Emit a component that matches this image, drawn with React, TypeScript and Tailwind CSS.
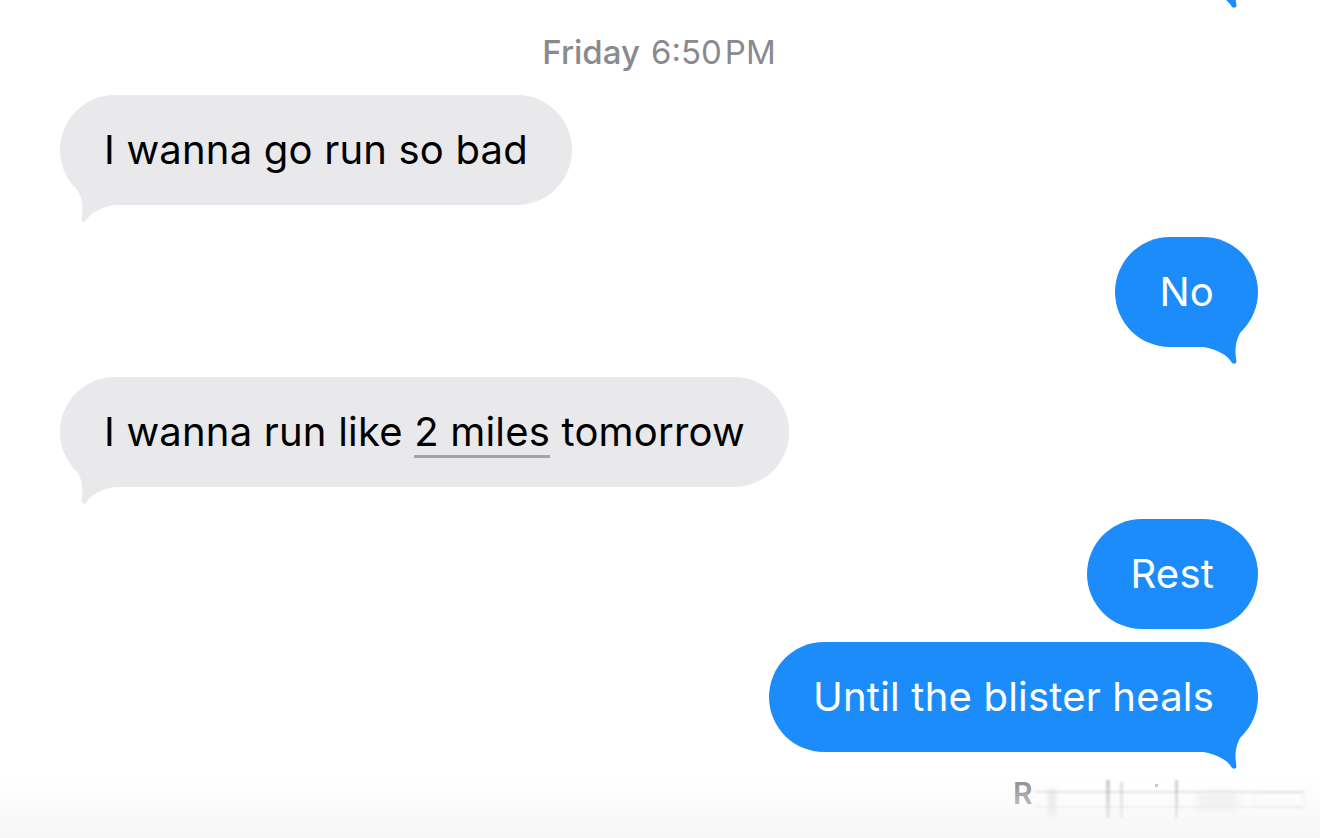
import React from "react";

const BLUE = "#1d8cfb";

function Tail({ side, color }: { side: "left" | "right"; color: string }) {
  return (
    <svg
      width="70"
      height="52"
      viewBox="0 0 70 52"
      className={
        side === "left"
          ? "absolute left-0 bottom-[-20px]"
          : "absolute right-0 bottom-[-20px] scale-x-[-1]"
      }
    >
      <path
        d="M12 5 L60 5 L72 30 C48 31 32 38 27 46.5 C25.5 49.5 22 49.5 21.5 46.5 C22.5 40 24 31 19 20 Z"
        fill={color}
      />
    </svg>
  );
}

function Bubble({
  side,
  tail = true,
  children,
  className = "",
}: {
  side: "left" | "right";
  tail?: boolean;
  children: React.ReactNode;
  className?: string;
}) {
  const isLeft = side === "left";
  return (
    <div className={`flex ${isLeft ? "justify-start" : "justify-end"} ${className}`}>
      <div
        className={`relative h-[110px] rounded-[55px] flex items-center px-[44px] text-[40px] leading-none tracking-[0.2px] ${
          isLeft ? "bg-[#e9e9eb] text-black" : "bg-[#1d8cfb] text-white"
        }`}
      >
        {tail && <Tail side={side} color={isLeft ? "#e9e9eb" : BLUE} />}
        <span className="relative">{children}</span>
      </div>
    </div>
  );
}

export default function App() {
  return (
    <div
      className="relative w-[1320px] h-[838px] overflow-hidden bg-white"
      style={{ fontFamily: "Inter, 'Noto Sans', sans-serif" }}
    >
      <div className="flex flex-col pl-[60px] pr-[62px]">
        <Bubble side="right" className="mt-[-119px]">
          <span className="opacity-0">Previous</span>
        </Bubble>

        <div className="mt-[43px] h-[36px] flex items-center justify-center text-[33px] text-[#8a8a8e] leading-none">
          <span className="font-medium">Friday</span>
          <span className="ml-[11px]">6:50&#8202;PM</span>
        </div>

        <Bubble side="left" className="mt-[25px]">
          I wanna go run so bad
        </Bubble>

        <Bubble side="right" className="mt-[32px]">
          No
        </Bubble>

        <Bubble side="left" className="mt-[30px]">
          I wanna run like{" "}
          <span className="underline decoration-[#a3a3a6] decoration-[3px] underline-offset-[9px]">
            2 miles
          </span>{" "}
          tomorrow
        </Bubble>

        <Bubble side="right" tail={false} className="mt-[32px]">
          Rest
        </Bubble>

        <Bubble side="right" className="mt-[13px]">
          Until the blister heals
        </Bubble>

        <div className="mt-[26px] flex justify-end mr-[-52px]">
          <div className="relative w-[297px] h-[42px]">
            <span className="absolute left-0 top-[0px] text-[30px] font-semibold text-[#8a8a8e] leading-none">
              R
            </span>
            <div className="absolute left-[22px] top-[13px] w-[270px] h-[2px] bg-[#c8c8cc] opacity-60 blur-[1px]" />
            <div className="absolute left-[22px] top-[28px] w-[270px] h-[2px] bg-[#d6d6d8] opacity-50 blur-[1px]" />
            <div className="absolute left-[35px] top-[12px] w-[8px] h-[28px] bg-[#c0c0c4] opacity-40 blur-[2px]" />
            <div className="absolute left-[93px] top-[2px] w-[4px] h-[38px] bg-[#9a9a9e] opacity-50 blur-[1px]" />
            <div className="absolute left-[107px] top-[4px] w-[3px] h-[36px] bg-[#a8a8ac] opacity-40 blur-[1px]" />
            <div className="absolute left-[142px] top-[6px] w-[3px] h-[3px] bg-[#9a9a9e] opacity-60" />
            <div className="absolute left-[162px] top-[2px] w-[3px] h-[38px] bg-[#a0a0a4] opacity-50 blur-[1px]" />
            <div className="absolute left-[185px] top-[14px] w-[40px] h-[20px] bg-[#d8d8dc] opacity-40 blur-[3px]" />
            <div className="absolute left-[240px] top-[14px] w-[52px] h-[16px] rounded-full border border-[#d0d0d4] opacity-50 blur-[1px]" />
          </div>
        </div>
      </div>
      <div className="absolute left-0 right-0 bottom-0 h-[60px] bg-gradient-to-b from-transparent to-[#f6f6f6]" />
    </div>
  );
}
